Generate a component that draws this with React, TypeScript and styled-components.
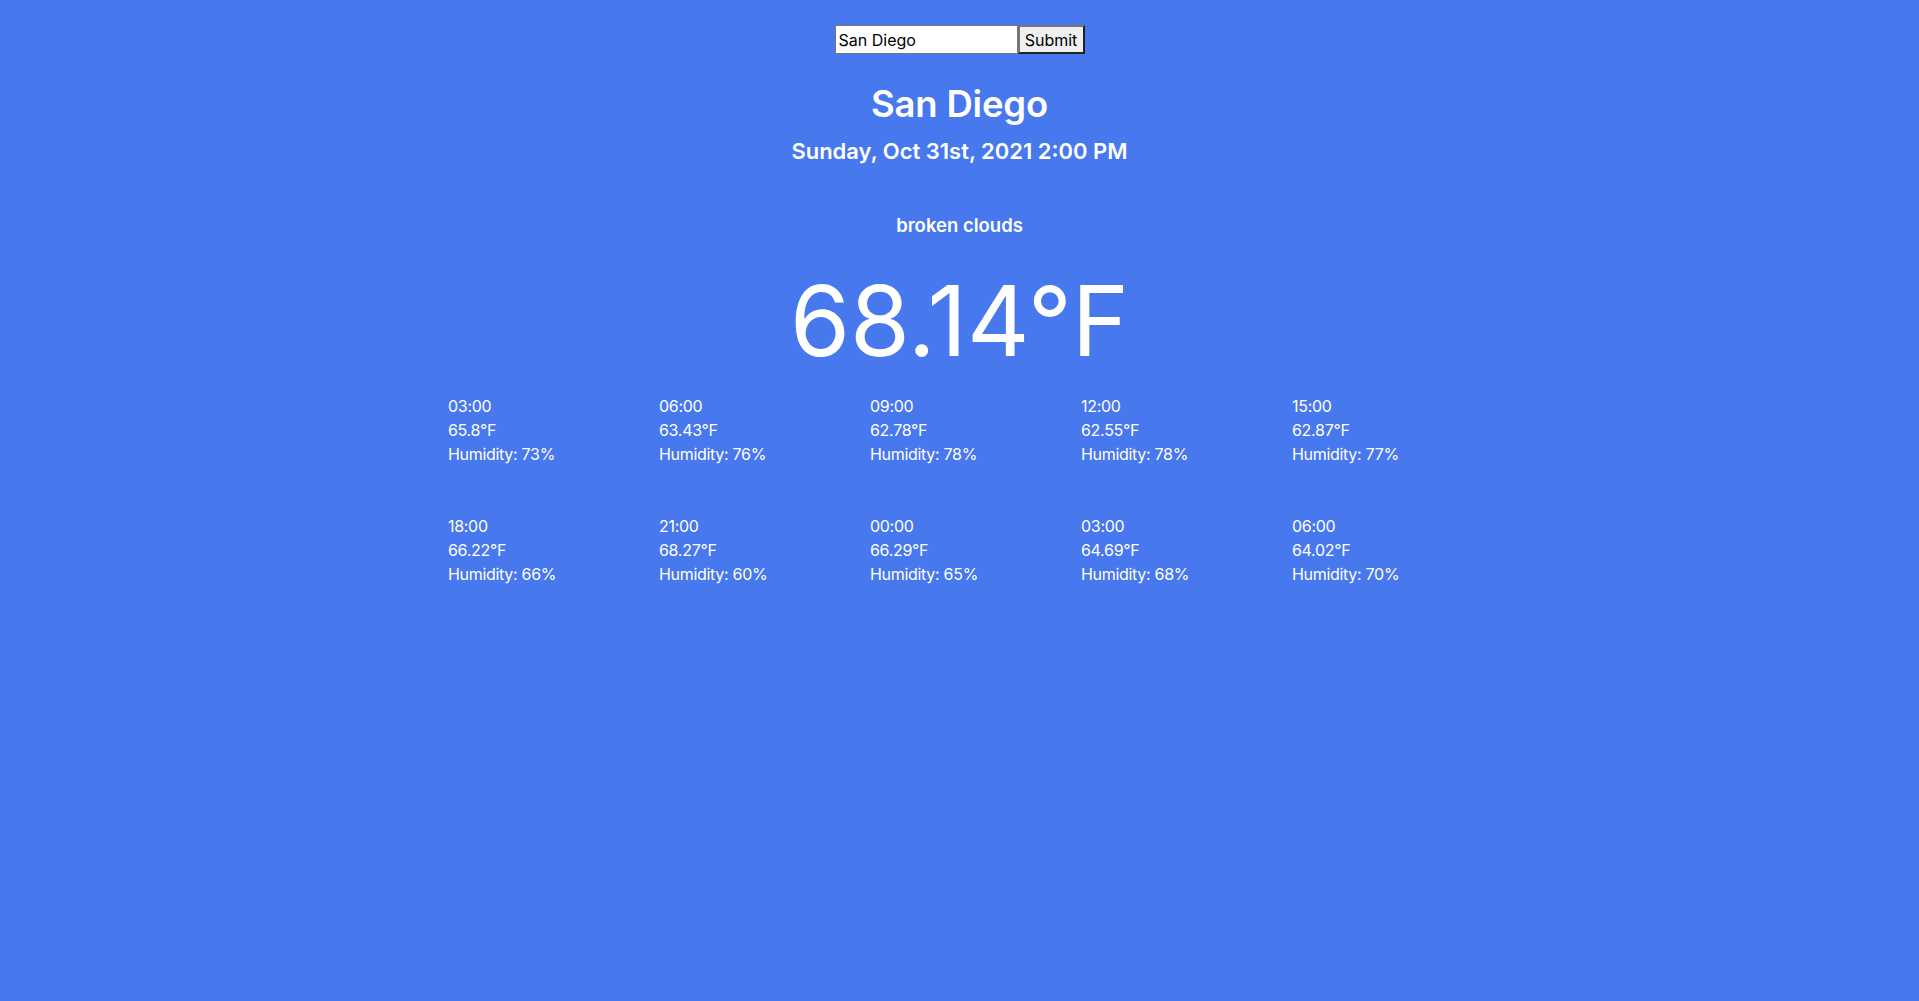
import * as React from 'react';
import styled, {createGlobalStyle} from 'styled-components';

const $BG = '#4778ee';
const $WHITE = '#ffffff';

const GlobalStyle = createGlobalStyle`
  html, body {
    margin: 0;
    padding: 0;
    background: ${$BG};
  }
  body {
    font-family: Inter, "Noto Sans", sans-serif;
    color: ${$WHITE};
  }
`;

const Page = styled.main`
  min-height: 1001px;
  display: flex;
  flex-direction: column;
  align-items: center;
  padding-top: 25px;
  box-sizing: border-box;
`;

const SearchForm = styled.form`
  display: flex;
  align-items: stretch;
  height: 29px;
`;

const SearchInput = styled.input`
  width: 183px;
  box-sizing: border-box;
  border: 1px solid #767676;
  padding: 0 3px;
  font-family: "Helvetica Neue", Inter, sans-serif;
  font-size: 16px;
  color: #000;
  background: #fff;
  outline: none;
`;

const SubmitButton = styled.button`
  width: 67px;
  box-sizing: border-box;
  border: 2px outset #767676;
  background: #efefef;
  font-family: "Helvetica Neue", Inter, sans-serif;
  font-size: 16px;
  color: #000;
  padding: 0 4px;
`;

const City = styled.h1`
  margin: 28px 0 0;
  font-size: 36.5px;
  line-height: 44px;
  font-weight: 600;
  letter-spacing: -0.2px;
`;

const DateLine = styled.h2`
  margin: 9px 0 0;
  font-size: 22px;
  line-height: 32px;
  font-weight: 600;
`;

const Description = styled.p`
  margin: 44px 0 0;
  font-size: 18.5px;
  line-height: 28px;
  font-weight: 600;
`;

const Temperature = styled.p`
  margin: 27px 0 0;
  font-size: 97px;
  line-height: 110px;
  font-weight: 400;
`;

const ForecastGrid = styled.section`
  width: 1087px;
  box-sizing: border-box;
  padding-left: 32px;
  margin-top: 18px;
  display: grid;
  grid-template-columns: repeat(5, 211px);
  row-gap: 48px;
`;

const ForecastItem = styled.div`
  display: flex;
  flex-direction: column;
  font-size: 16px;
  line-height: 24px;
  font-weight: 400;
  letter-spacing: -0.3px;
`;

interface Forecast {
  time: string;
  temp: string;
  humidity: number;
}

const forecasts: Forecast[] = [
  {time: '03:00', temp: '65.8', humidity: 73},
  {time: '06:00', temp: '63.43', humidity: 76},
  {time: '09:00', temp: '62.78', humidity: 78},
  {time: '12:00', temp: '62.55', humidity: 78},
  {time: '15:00', temp: '62.87', humidity: 77},
  {time: '18:00', temp: '66.22', humidity: 66},
  {time: '21:00', temp: '68.27', humidity: 60},
  {time: '00:00', temp: '66.29', humidity: 65},
  {time: '03:00', temp: '64.69', humidity: 68},
  {time: '06:00', temp: '64.02', humidity: 70}
];

const App = () => {
  const [city, setCity] = React.useState('San Diego');

  return (
    <>
      <GlobalStyle />
      <Page>
        <SearchForm onSubmit={(e) => e.preventDefault()}>
          <SearchInput value={city} onChange={(e) => setCity(e.target.value)} />
          <SubmitButton type="submit">Submit</SubmitButton>
        </SearchForm>
        <City>San Diego</City>
        <DateLine>Sunday, Oct 31st, 2021 2:00 PM</DateLine>
        <Description>broken clouds</Description>
        <Temperature>68.14°F</Temperature>
        <ForecastGrid>
          {forecasts.map(({time, temp, humidity}, i) => (
            <ForecastItem key={i}>
              <span>{time}</span>
              <span>{temp}°F</span>
              <span>Humidity: {humidity}%</span>
            </ForecastItem>
          ))}
        </ForecastGrid>
      </Page>
    </>
  );
};

export default App;
